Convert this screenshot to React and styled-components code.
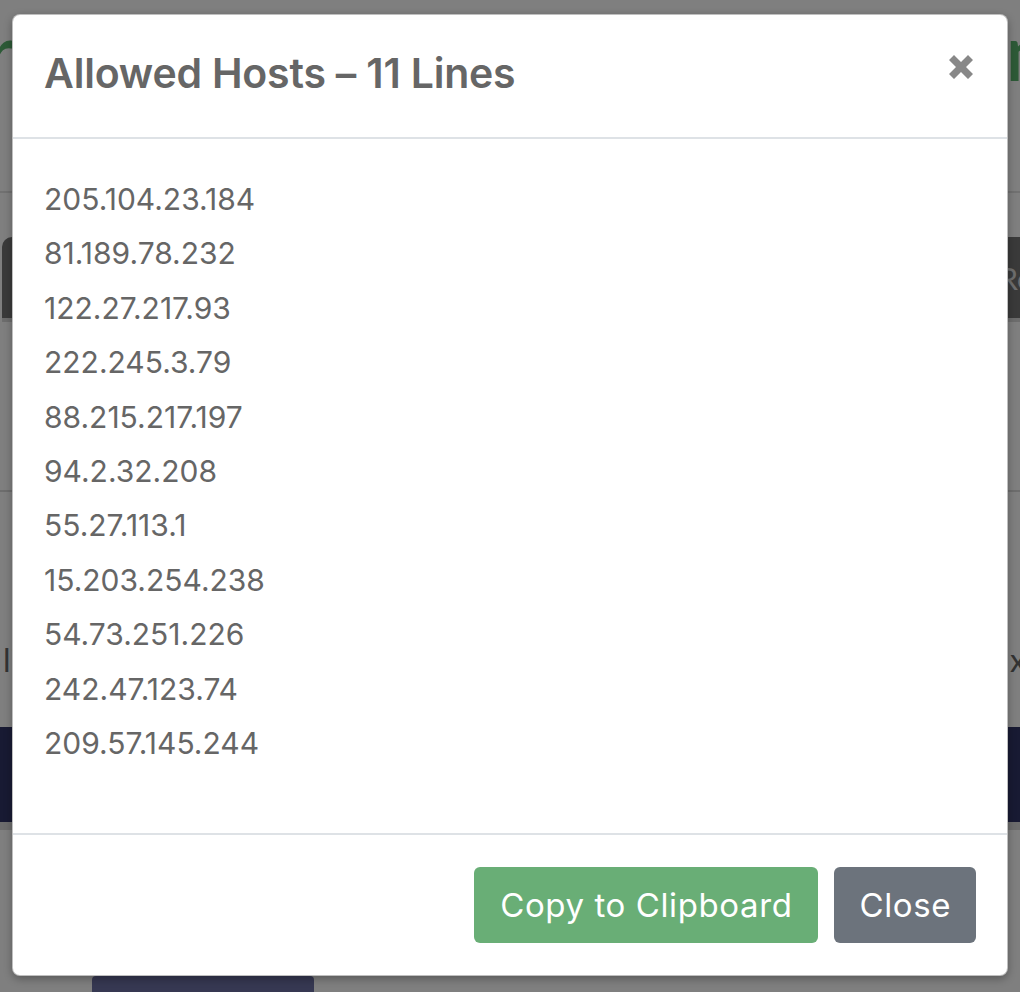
import React from 'react'
import styled, { createGlobalStyle } from 'styled-components'

const Global = createGlobalStyle`
  html, body {
    margin: 0;
    padding: 0;
    background: #ffffff;
  }
  * { box-sizing: border-box; }
`

const hosts = [
  '205.104.23.184',
  '81.189.78.232',
  '122.27.217.93',
  '222.245.3.79',
  '88.215.217.197',
  '94.2.32.208',
  '55.27.113.1',
  '15.203.254.238',
  '54.73.251.226',
  '242.47.123.74',
  '209.57.145.244',
]

// page behind the dialog
const Page = styled.div`
  position: relative;
  width: 1020px;
  height: 992px;
  overflow: hidden;
  font-family: Lato, "Open Sans", sans-serif;
  display: flex;
  flex-direction: column;
  & > * { flex-shrink: 0; }
`

const TopBar = styled.header`
  height: 193px;
  border-bottom: 2px solid #e2e2e2;
  display: flex;
  justify-content: space-between;
  align-items: flex-start;
  padding-top: 10px;
`

const Logo = styled.span`
  color: #5ab46e;
  font-size: 80px;
  font-weight: 500;
  line-height: 1;
  margin: 0 ${p => p.$right ? '-30px' : '0'} 0 ${p => p.$right ? '0' : '-14px'};
`

const Tabs = styled.nav`
  margin: 44px 0 0 2px;
  height: 85px;
  background: #747474;
  border-radius: 10px 0 0 0;
  display: flex;
  justify-content: flex-end;
  align-items: center;
  color: #dcdcdc;
  font-size: 30px;
  border-bottom: 4px solid #dadada;
  span { margin-right: -14px; }
`

const Strip = styled.div`
  height: 170px;
  border-bottom: 2px solid #dadada;
`

const InfoRow = styled.div`
  height: 235px;
  display: flex;
  justify-content: space-between;
  align-items: center;
  color: #666;
  font-size: 32px;
  padding-top: 100px;
  span:first-child { margin-left: 3px; }
  span:last-child { margin-right: -6px; }
`

const Band = styled.div`
  height: 103px;
  background: #303466;
  border-bottom: 8px solid #dadada;
`

const BottomButton = styled.div`
  margin: 146px 0 0 92px;
  width: 222px;
  height: 60px;
  background: #6c70a4;
  border-radius: 4px;
`

const Backdrop = styled.div`
  position: absolute;
  inset: 0;
  background: rgba(0, 0, 0, 0.5);
`

// dialog
const Dialog = styled.div`
  position: absolute;
  top: 14px;
  left: 12px;
  width: 996px;
  background: #fff;
  border: 1px solid rgba(0, 0, 0, 0.25);
  border-radius: 8px;
  box-shadow: 0 3px 9px rgba(0, 0, 0, 0.3);
  display: flex;
  flex-direction: column;
  font-family: Inter, "Open Sans", sans-serif;
  color: #6a6a6a;
`

const Header = styled.div`
  height: 124px;
  border-bottom: 2px solid #dee2e6;
  display: flex;
  align-items: center;
  justify-content: space-between;
  padding: 0 33px 6px 31px;
`

const Title = styled.h4`
  margin: 0;
  font-size: 41px;
  font-weight: 600;
  letter-spacing: -0.2px;
  color: #666;
`

const CloseX = styled.button`
  border: 0;
  background: none;
  padding: 0;
  margin-top: -12px;
  width: 26px;
  height: 26px;
  display: flex;
  cursor: pointer;
`

const Body = styled.div`
  height: 696px;
  padding: 33px 31px;
  border-bottom: 2px solid #dee2e6;
`

const Line = styled.div`
  font-size: 30px;
  line-height: 54.4px;
  color: #666;
`

const Footer = styled.div`
  height: 140px;
  display: flex;
  justify-content: flex-end;
  align-items: center;
  gap: 16px;
  padding: 0 31px 0 0;
`

const Button = styled.button`
  height: 76px;
  padding: 0 ${p => p.$pad}px;
  border: 0;
  border-radius: 6px;
  background: ${p => p.$bg};
  color: #fff;
  font-family: Inter, "Open Sans", sans-serif;
  font-size: 33px;
  letter-spacing: 0.6px;
  cursor: pointer;
`

const TimesIcon = () => (
  <svg width="26" height="26" viewBox="0 0 26 26">
    <path
      d="M1 6 L6 1 L13 8 L20 1 L25 6 L18 13 L25 20 L20 25 L13 18 L6 25 L1 20 L8 13 Z"
      fill="#888"
    />
  </svg>
)

const App = () => {
  return (
    <Page>
      <Global />
      <TopBar>
        <Logo>r</Logo>
        <Logo $right>n</Logo>
      </TopBar>
      <Tabs><span>Ro</span></Tabs>
      <Strip />
      <InfoRow>
        <span>li</span>
        <span>x</span>
      </InfoRow>
      <Band />
      <BottomButton />
      <Backdrop />
      <Dialog>
        <Header>
          <Title>Allowed Hosts – 11 Lines</Title>
          <CloseX aria-label="close">
            <TimesIcon />
          </CloseX>
        </Header>
        <Body>
          {hosts.map(h => <Line key={h}>{h}</Line>)}
        </Body>
        <Footer>
          <Button $bg="#69ae76" $pad={26}>Copy to Clipboard</Button>
          <Button $bg="#6c737c" $pad={25}>Close</Button>
        </Footer>
      </Dialog>
    </Page>
  )
}

export default App
